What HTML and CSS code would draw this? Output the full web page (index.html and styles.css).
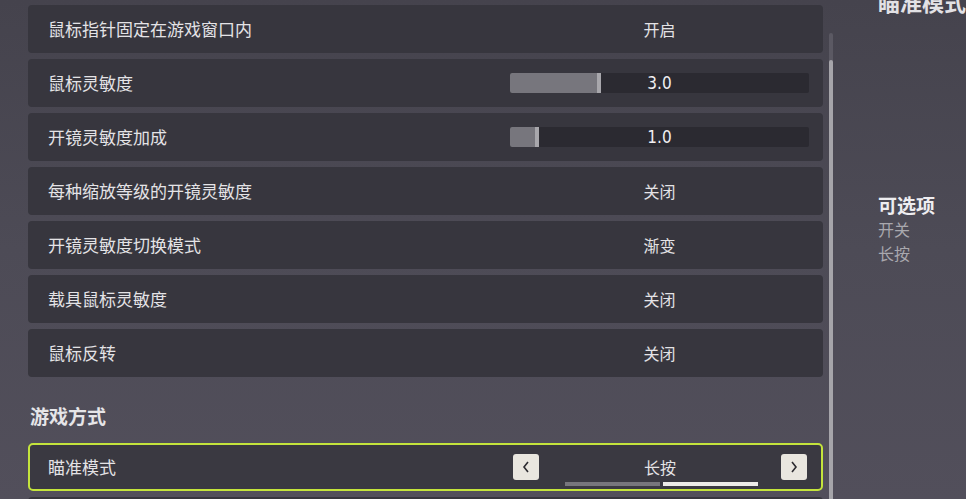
FILE: index.html
```html
<!DOCTYPE html>
<html lang="zh-CN">
<head>
  <meta charset="UTF-8">
  <meta name="viewport" content="width=device-width, initial-scale=1.0">
  <title>设置</title>
  <link rel="stylesheet" href="styles.css">
</head>
<body>
  <div class="screen">
    <main class="settings">
      <div class="row"><span class="label">鼠标指针固定在游戏窗口内</span><span class="value">开启</span></div>
      <div class="row">
        <span class="label">鼠标灵敏度</span>
        <div class="slider"><div class="fill" style="width:91px"></div><span class="num">3.0</span></div>
      </div>
      <div class="row">
        <span class="label">开镜灵敏度加成</span>
        <div class="slider"><div class="fill" style="width:29px"></div><span class="num">1.0</span></div>
      </div>
      <div class="row"><span class="label">每种缩放等级的开镜灵敏度</span><span class="value">关闭</span></div>
      <div class="row"><span class="label">开镜灵敏度切换模式</span><span class="value">渐变</span></div>
      <div class="row"><span class="label">载具鼠标灵敏度</span><span class="value">关闭</span></div>
      <div class="row"><span class="label">鼠标反转</span><span class="value">关闭</span></div>

      <h3 class="section">游戏方式</h3>

      <div class="row row-active">
        <span class="label">瞄准模式</span>
        <div class="selector">
          <button class="arrow" aria-label="上一项">
            <svg width="10" height="14" viewBox="0 0 10 14"><path d="M7 2 L3 7 L7 12" fill="none" stroke="#2c2b30" stroke-width="1.6"/></svg>
          </button>
          <span class="choice">长按</span>
          <button class="arrow" aria-label="下一项">
            <svg width="10" height="14" viewBox="0 0 10 14"><path d="M3 2 L7 7 L3 12" fill="none" stroke="#2c2b30" stroke-width="1.6"/></svg>
          </button>
          <div class="pips"><span class="pip"></span><span class="pip pip-on"></span></div>
        </div>
      </div>
      <div class="row"></div>
    </main>

    <div class="scrollbar"><div class="thumb"></div></div>

    <aside class="info">
      <h2 class="info-title">瞄准模式</h2>
      <div class="options">
        <div class="options-head">可选项</div>
        <div class="option">开关</div>
        <div class="option">长按</div>
      </div>
    </aside>
  </div>
</body>
</html>
```

FILE: styles.css
```css
body {
  margin: 0;
  background: linear-gradient(180deg, #45434d 0%, #4d4b56 50%, #524f5b 100%);
  color: #e4e3e6;
  font-family: "Noto Sans CJK SC", "Noto Sans", sans-serif;
  overflow: hidden;
}
.screen {
  display: flex;
  width: 966px;
  height: 499px;
  overflow: hidden;
}
.settings {
  width: 795px;
  margin-left: 28px;
  padding-top: 5px;
  flex-shrink: 0;
}
.row {
  display: flex;
  align-items: center;
  height: 48px;
  margin-bottom: 6px;
  padding-left: 20px;
  box-sizing: border-box;
  background: #37363e;
  border-radius: 4px;
}
.label {
  flex: 1;
  font-size: 17px;
  line-height: 24px;
}
.value {
  width: 299px;
  margin-right: 14px;
  text-align: center;
  font-size: 16px;
  line-height: 24px;
}
.slider {
  display: grid;
  align-items: center;
  width: 299px;
  height: 20px;
  margin-right: 14px;
  background: #2b2a31;
  border-radius: 2px;
}
.fill {
  grid-area: 1 / 1;
  justify-self: start;
  height: 20px;
  box-sizing: border-box;
  background: #77767d;
  border-right: 4px solid #a8a7ac;
  border-radius: 2px 0 0 2px;
}
.num {
  grid-area: 1 / 1;
  justify-self: center;
  font-family: "DejaVu Sans", sans-serif;
  font-stretch: condensed;
  font-size: 17px;
  line-height: 20px;
  color: #f0eff2;
}
.section {
  margin: 26px 0 14px 2px;
  font-size: 19px;
  line-height: 26px;
  font-weight: bold;
  color: #e6e5e8;
}
.row-active {
  border: 2px solid #c4e43c;
  border-radius: 5px;
  padding-left: 18px;
  background: #3a3941;
}
.selector {
  position: relative;
  display: flex;
  align-items: center;
  width: 299px;
  height: 100%;
  margin-right: 12px;
  padding: 0 2px 0 3px;
  box-sizing: border-box;
}
.arrow {
  display: flex;
  align-items: center;
  justify-content: center;
  width: 26px;
  height: 26px;
  padding: 0;
  border: none;
  border-radius: 3px;
  background: #e9e6df;
}
.choice {
  flex: 1;
  text-align: center;
  font-size: 16px;
  line-height: 24px;
}
.pips {
  position: absolute;
  left: 55px;
  bottom: 3px;
  display: flex;
  gap: 3px;
}
.pip {
  width: 95px;
  height: 4px;
  background: #77767c;
}
.pip-on {
  background: #ecebe8;
}
.scrollbar {
  width: 4px;
  margin: 33px 0 0 6px;
  flex-shrink: 0;
  background: #5b5963;
  border-radius: 2px 2px 0 0;
  padding-top: 27px;
}
.thumb {
  height: 100%;
  background: #a6a5aa;
  border-radius: 2px 2px 0 0;
}
.info {
  margin-left: 45px;
  flex: 1;
  min-width: 0;
}
.info-title {
  margin: -12px 0 0;
  font-size: 22px;
  line-height: 26px;
  font-weight: bold;
  color: #e2e1e5;
  white-space: nowrap;
}
.options {
  margin-top: 179px;
}
.options-head {
  font-size: 19px;
  line-height: 24px;
  font-weight: bold;
  color: #eeedf0;
}
.option {
  font-size: 16px;
  line-height: 24px;
  color: #a9a8ae;
}
```
